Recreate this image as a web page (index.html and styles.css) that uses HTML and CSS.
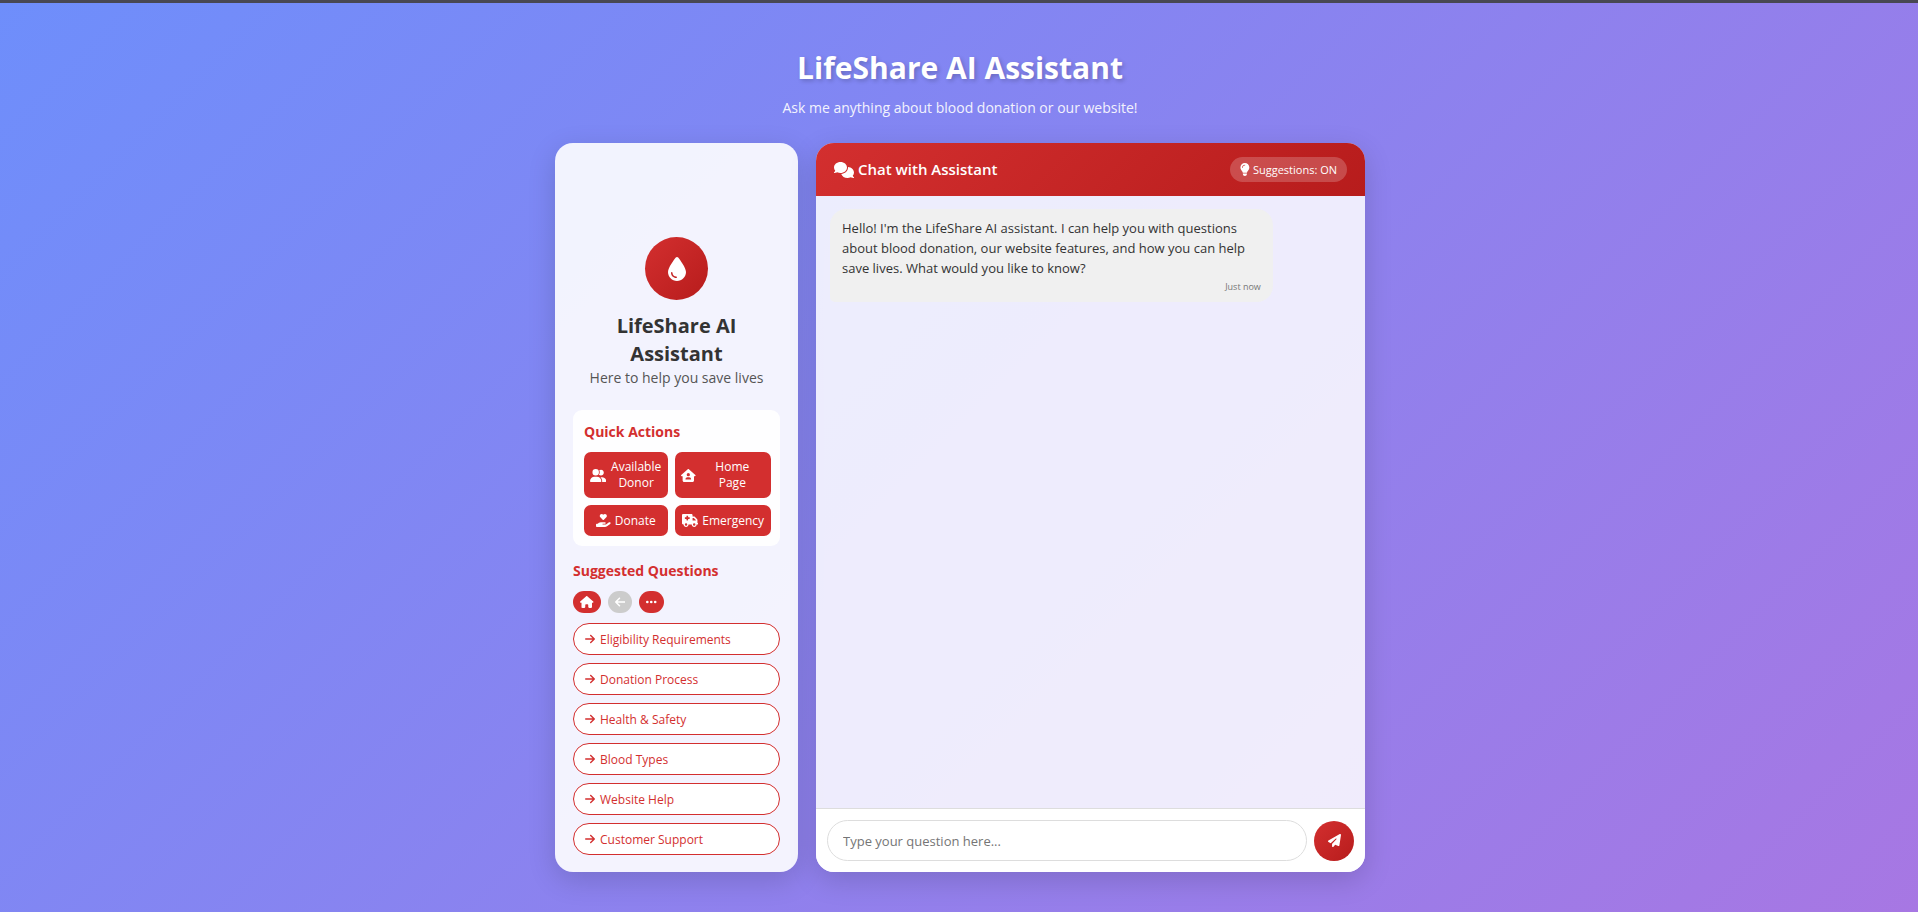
FILE: index.html
```html
<!DOCTYPE html>
<html lang="en">
<head>
<meta charset="utf-8">
<meta name="viewport" content="width=device-width, initial-scale=1">
<title>LifeShare AI Assistant</title>
<link rel="stylesheet" href="styles.css">
</head>
<body>
<svg class="sprite" aria-hidden="true">
  <symbol id="arrow-right" viewBox="0 0 448 512"><path d="M438.6 278.6c12.5-12.5 12.5-32.8 0-45.3l-160-160c-12.5-12.5-32.8-12.5-45.3 0s-12.5 32.8 0 45.3L338.8 224 32 224c-17.7 0-32 14.3-32 32s14.3 32 32 32l306.7 0L233.4 393.4c-12.5 12.5-12.5 32.8 0 45.3s32.8 12.5 45.3 0l160-160z"/></symbol>
</svg>
<div class="page">
  <header class="hero">
    <h1 class="hero-title">LifeShare AI Assistant</h1>
    <p class="hero-text">Ask me anything about blood donation or our website!</p>
  </header>
  <main class="layout">
    <aside class="sidebar">
      <div class="profile">
        <div class="avatar"><svg class="icon" viewBox="0 0 384 512"><path d="M192 512C86 512 0 426 0 320C0 228.8 130.2 57.7 166.6 11.7C172.6 4.2 181.5 0 191.1 0h1.8c9.6 0 18.5 4.2 24.5 11.7C253.8 57.7 384 228.8 384 320c0 106-86 192-192 192zM96 336c0-8.8-7.2-16-16-16s-16 7.2-16 16c0 61.9 50.1 112 112 112c8.8 0 16-7.2 16-16s-7.2-16-16-16c-44.2 0-80-35.8-80-80z"/></svg></div>
        <h2 class="profile-name">LifeShare AI Assistant</h2>
        <p class="profile-text">Here to help you save lives</p>
      </div>
      <section class="quick">
        <h3 class="section-title">Quick Actions</h3>
        <div class="quick-grid">
          <button class="quick-button" type="button"><svg class="icon" viewBox="0 0 640 512"><path d="M96 128a128 128 0 1 1 256 0A128 128 0 1 1 96 128zM0 482.3C0 383.8 79.8 304 178.3 304h91.4C368.2 304 448 383.8 448 482.3c0 16.4-13.3 29.7-29.7 29.7H29.7C13.3 512 0 498.7 0 482.3zM609.3 512H471.4c5.4-9.4 8.6-20.3 8.6-32v-8c0-60.7-27.1-115.2-69.8-151.8c2.4-.1 4.7-.2 7.1-.2h61.4C567.8 320 640 392.2 640 481.3c0 17-13.8 30.7-30.7 30.7zM432 256c-31 0-59-12.6-79.3-32.9C372.4 196.5 384 163.6 384 128c0-26.8-6.6-52.1-18.3-74.3C384.3 40.1 407.2 32 432 32c61.9 0 112 50.1 112 112s-50.1 112-112 112z"/></svg><span class="quick-label">Available Donor</span></button>
          <button class="quick-button quick-button-wide" type="button"><svg class="icon" viewBox="0 0 576 512"><path d="M575.8 255.5c0 18-15 32.1-32 32.1h-32l.7 160.2c.2 35.5-28.5 64.3-64 64.3H128.1c-35.3 0-64-28.7-64-64V287.6H32c-18 0-32-14-32-32.1c0-9 3-17 10-24L266.4 8c7-7 15-8 22-8s15 2 21 7L564.8 231.5c8 7 12 15 11 24zM352 224a64 64 0 1 0 -128 0 64 64 0 1 0 128 0zm-96 96c-44.2 0-80 35.8-80 80c0 8.8 7.2 16 16 16H384c8.8 0 16-7.2 16-16c0-44.2-35.8-80-80-80H256z"/></svg><span class="quick-label">Home<br>Page</span></button>
          <button class="quick-button" type="button"><svg class="icon" viewBox="0 0 576 512"><path d="M148 76.6C148 34.3 182.3 0 224.6 0c20.3 0 39.8 8.1 54.1 22.4l9.3 9.3 9.3-9.3C311.6 8.1 331.1 0 351.4 0C393.7 0 428 34.3 428 76.6c0 20.3-8.1 39.8-22.4 54.1L302.1 234.1c-7.8 7.8-20.5 7.8-28.3 0L170.4 130.7C156.1 116.4 148 96.9 148 76.6zM568.2 336.3c13.1 17.8 9.3 42.8-8.5 55.9L433.1 485.5c-23.4 17.2-51.6 26.5-80.7 26.5H32c-17.7 0-32-14.3-32-32V416c0-17.7 14.3-32 32-32H68.8l44.9-36c22.7-18.2 50.9-28 80-28H352c17.7 0 32 14.3 32 32s-14.3 32-32 32H272c-8.8 0-16 7.2-16 16s7.2 16 16 16H392.6l119.7-88.2c17.8-13.1 42.8-9.3 55.9 8.5z"/></svg><span>Donate</span></button>
          <button class="quick-button" type="button"><svg class="icon" viewBox="0 0 640 512"><path d="M0 48C0 21.5 21.5 0 48 0H368c26.5 0 48 21.5 48 48V96h50.7c17 0 33.3 6.7 45.3 18.7L589.3 192c12 12 18.7 28.3 18.7 45.3V352c17.7 0 32 14.3 32 32s-14.3 32-32 32H576c0 53-43 96-96 96s-96-43-96-96H256c0 53-43 96-96 96s-96-43-96-96H48c-26.5 0-48-21.5-48-48V48zM416 256H544V237.3L466.7 160H416v96zM160 464a48 48 0 1 0 0-96 48 48 0 1 0 0 96zm368-48a48 48 0 1 0 -96 0 48 48 0 1 0 96 0zM176 80v48l-48 0c-8.8 0-16 7.2-16 16v32c0 8.8 7.2 16 16 16h48v48c0 8.8 7.2 16 16 16h32c8.8 0 16-7.2 16-16V192h48c8.8 0 16-7.2 16-16V144c0-8.8-7.2-16-16-16H240V80c0-8.8-7.2-16-16-16H192c-8.8 0-16 7.2-16 16z"/></svg><span>Emergency</span></button>
        </div>
      </section>
      <section class="suggested">
        <h3 class="section-title">Suggested Questions</h3>
        <div class="pager">
          <button class="pager-button" type="button" aria-label="Home"><svg class="icon" viewBox="0 0 576 512"><path d="M575.8 255.5c0 18-15 32.1-32 32.1h-32l.7 160.2c0 2.7-.2 5.4-.5 8.1V472c0 22.1-17.9 40-40 40H392c-22.1 0-40-17.9-40-40V384c0-17.7-14.3-32-32-32H256c-17.7 0-32 14.3-32 32v88c0 22.1-17.9 40-40 40H104c-22.1 0-40-17.9-40-40V287.6H32c-18 0-32-14-32-32.1c0-9 3-17 10-24L266.4 8c7-7 15-8 22-8s15 2 21 7L564.8 231.5c8 7 12 15 11 24z"/></svg></button>
          <button class="pager-button" type="button" aria-label="Back" disabled><svg class="icon" viewBox="0 0 448 512"><path d="M9.4 233.4c-12.5 12.5-12.5 32.8 0 45.3l160 160c12.5 12.5 32.8 12.5 45.3 0s12.5-32.8 0-45.3L109.2 288 416 288c17.7 0 32-14.3 32-32s-14.3-32-32-32l-306.7 0L214.6 118.6c12.5-12.5 12.5-32.8 0-45.3s-32.8-12.5-45.3 0l-160 160z"/></svg></button>
          <button class="pager-button" type="button" aria-label="More"><svg class="icon" viewBox="0 0 448 512"><circle cx="56" cy="256" r="56"/><circle cx="224" cy="256" r="56"/><circle cx="392" cy="256" r="56"/></svg></button>
        </div>
        <div class="questions">
          <button class="question" type="button"><svg class="icon"><use href="#arrow-right"/></svg>Eligibility Requirements</button>
          <button class="question" type="button"><svg class="icon"><use href="#arrow-right"/></svg>Donation Process</button>
          <button class="question" type="button"><svg class="icon"><use href="#arrow-right"/></svg>Health &amp; Safety</button>
          <button class="question" type="button"><svg class="icon"><use href="#arrow-right"/></svg>Blood Types</button>
          <button class="question" type="button"><svg class="icon"><use href="#arrow-right"/></svg>Website Help</button>
          <button class="question" type="button"><svg class="icon"><use href="#arrow-right"/></svg>Customer Support</button>
        </div>
      </section>
    </aside>
    <section class="chat">
      <div class="chat-header">
        <h2 class="chat-title"><svg class="icon" viewBox="0 0 640 512"><path d="M208 352c114.9 0 208-78.8 208-176S322.9 0 208 0S0 78.8 0 176c0 38.6 14.7 74.3 39.6 103.4c-3.5 9.4-8.7 17.7-14.2 24.7c-4.8 6.2-9.7 11-13.3 14.3c-1.8 1.6-3.3 2.9-4.3 3.7c-.5 .4-.9 .7-1.1 .8l-.2 .2C1 327.2-1.4 334.4 .8 340.9S9.1 352 16 352c21.8 0 43.8-5.6 62.1-12.5c9.2-3.5 17.8-7.4 25.2-11.4C134.1 343.3 169.8 352 208 352zM448 176c0 112.3-99.1 196.9-216.5 207C255.8 457.4 336.4 512 432 512c38.2 0 73.9-8.7 104.7-23.9c7.5 4 16 7.9 25.2 11.4c18.3 6.9 40.3 12.5 62.1 12.5c6.9 0 13.1-4.5 15.2-11.1c2.1-6.6-.2-13.8-5.8-17.9l-.2-.2c-.2-.2-.6-.4-1.1-.8c-1-.8-2.5-2-4.3-3.7c-3.6-3.3-8.5-8.1-13.3-14.3c-5.5-7-10.7-15.4-14.2-24.7c24.9-29 39.6-64.7 39.6-103.4c0-92.8-84.9-168.9-192.6-175.5c.4 5.1 .6 10.3 .6 15.5z"/></svg>Chat with Assistant</h2>
        <button class="toggle" type="button"><svg class="icon" viewBox="0 0 384 512"><path d="M272 384c9.6-31.9 29.5-59.1 49.2-86.2c5.2-7.1 10.4-14.2 15.4-21.4c19.8-28.5 31.4-63 31.4-100.3C368 78.8 289.2 0 192 0S16 78.8 16 176c0 37.3 11.6 71.9 31.4 100.3c5 7.2 10.2 14.3 15.4 21.4c19.8 27.1 39.7 54.4 49.2 86.2H272zM192 512c44.2 0 80-35.8 80-80V416H112v16c0 44.2 35.8 80 80 80zM112 176c0 8.8-7.2 16-16 16s-16-7.2-16-16c0-61.9 50.1-112 112-112c8.8 0 16 7.2 16 16s-7.2 16-16 16c-44.2 0-80 35.8-80 80z"/></svg>Suggestions: ON</button>
      </div>
      <div class="messages">
        <article class="message">
          <p class="message-text">Hello! I'm the LifeShare AI assistant. I can help you with questions about blood donation, our website features, and how you can help save lives. What would you like to know?</p>
          <time class="message-time">Just now</time>
        </article>
      </div>
      <form class="composer">
        <input class="composer-input" type="text" placeholder="Type your question here..." aria-label="Your question">
        <button class="send" type="button" aria-label="Send"><svg class="icon" viewBox="0 0 512 512"><path d="M498.1 5.6c10.1 7 15.4 19.1 13.5 31.2l-64 416c-1.5 9.7-7.4 18.2-16 23s-18.9 5.4-28 1.6L284 427.7l-68.5 74.1c-8.9 9.7-22.9 12.9-35.2 8.1S160 493.2 160 480V396.4c0-4 1.5-7.8 4.2-10.7L331.8 202.8c5.8-6.3 5.6-16-.4-22s-15.7-6.4-22-.7L106 360.8 17.7 316.6C7.1 311.3 .3 300.7 0 288.9s5.9-22.8 16.1-28.7l448-256c10.7-6.1 23.9-5.5 34 1.4z"/></svg></button>
      </form>
    </section>
  </main>
</div>
</body>
</html>
```
FILE: styles.css
```css
:root {
  --red: #d32f2f;
  --red-fade: linear-gradient(135deg, #d32f2f, #b71c1c);
}

* { box-sizing: border-box; margin: 0; padding: 0; }

body {
  font-family: "Open Sans", "Noto Sans", sans-serif;
  color: #333;
  background: linear-gradient(135deg, #6e8efb, #a777e3) fixed;
}

button, input { font: inherit; }
button { border: none; cursor: pointer; }

.sprite { display: none; }

.icon {
  flex: none;
  height: 1em;
  fill: currentColor;
}

.page {
  display: flex;
  flex-direction: column;
  min-height: 100vh;
  padding: 43px 20px 40px 22px;
  border-top: 3px solid #484853;
}

.hero {
  margin-bottom: 24px;
  text-align: center;
  color: #fff;
}

.hero-title {
  margin-bottom: 7px;
  font-size: 30px;
  line-height: 44px;
  text-shadow: 2px 2px 4px rgba(0, 0, 0, 0.2);
}

.hero-text {
  font-size: 14px;
  line-height: 22px;
  opacity: 0.9;
}

.layout {
  flex: 1;
  display: grid;
  grid-template-columns: minmax(0, 243fr) minmax(0, 549fr);
  gap: 18px;
  width: 100%;
  max-width: 810px;
  margin: 0 auto;
}

.sidebar, .chat {
  border-radius: 18px;
  box-shadow: 0 8px 28px rgba(0, 0, 0, 0.15);
}

.sidebar {
  display: flex;
  flex-direction: column;
  justify-content: flex-end;
  gap: 14px;
  padding: 18px 18px 17px;
  background: rgba(255, 255, 255, 0.9);
}

.profile {
  display: flex;
  flex-direction: column;
  align-items: center;
  margin-bottom: 8px;
  text-align: center;
}

.avatar {
  display: grid;
  place-items: center;
  width: 63px;
  height: 63px;
  margin-bottom: 12px;
  border-radius: 50%;
  background: var(--red-fade);
  color: #fff;
  font-size: 24px;
}

.profile-name {
  padding: 0 28px;
  font-size: 20px;
  line-height: 28px;
}

.profile-text {
  font-size: 14px;
  line-height: 20px;
  color: #555;
  white-space: nowrap;
}

.quick {
  padding: 11px 9px 10px 11px;
  border-radius: 9px;
  background: rgba(255, 255, 255, 0.9);
}

.section-title {
  font-size: 14px;
  line-height: 22px;
  color: var(--red);
}

.quick-grid {
  display: grid;
  grid-template-columns: minmax(0, 84fr) minmax(0, 96fr);
  gap: 7px;
  margin-top: 9px;
}

.quick-button {
  display: flex;
  align-items: center;
  justify-content: center;
  gap: 4px;
  min-height: 31px;
  padding: 7px 6px;
  border-radius: 7px;
  background: var(--red);
  color: #fff;
  font-size: 12px;
  line-height: 16px;
}

.quick-button .icon { height: 13px; }

.quick-button-wide .quick-label { flex: 1; }

.pager {
  display: flex;
  gap: 7px;
  margin: 9px 0 10px;
}

.pager-button {
  display: flex;
  align-items: center;
  height: 22px;
  padding: 0 7px;
  border-radius: 14px;
  background: var(--red);
  color: #fff;
  font-size: 12px;
}

.pager-button:disabled { background: #ccc; }

.questions {
  display: grid;
  gap: 8px;
}

.question {
  display: flex;
  align-items: center;
  gap: 5px;
  min-height: 32px;
  padding: 0 11px;
  border: 1px solid var(--red);
  border-radius: 18px;
  background: #fff;
  color: var(--red);
  font-size: 12px;
  text-align: left;
}

.question .icon { width: 10px; }

.chat {
  display: flex;
  flex-direction: column;
  overflow: hidden;
  background: rgba(255, 255, 255, 0.85);
}

.chat-header {
  display: flex;
  align-items: center;
  justify-content: space-between;
  padding: 14px 18px;
  background: var(--red-fade);
  color: #fff;
}

.chat-title {
  display: flex;
  align-items: center;
  gap: 4px;
  font-size: 15px;
  line-height: 25px;
  font-weight: 600;
}

.chat-title .icon { height: 16px; }

.toggle {
  display: flex;
  align-items: center;
  gap: 3px;
  padding: 4px 10px;
  border-radius: 14px;
  background: rgba(255, 255, 255, 0.2);
  color: #fff;
  font-size: 11px;
  line-height: 17px;
}

.toggle .icon { height: 13px; }

.messages {
  flex: 1;
  padding: 13px 14px;
}

.message {
  width: fit-content;
  max-width: 85%;
  padding: 9px 12px;
  border-radius: 16px 16px 16px 5px;
  background: #f0f0f0;
}

.message-text {
  font-size: 13px;
  line-height: 20px;
}

.message-time {
  display: block;
  margin-top: 2px;
  font-size: 9px;
  line-height: 13px;
  text-align: right;
  color: #777;
}

.composer {
  display: flex;
  align-items: center;
  gap: 7px;
  padding: 11px;
  border-top: 1px solid #ddd;
  background: #fff;
}

.composer-input {
  flex: 1;
  min-width: 0;
  height: 41px;
  padding: 0 15px;
  border: 1px solid #ddd;
  border-radius: 22px;
  background: #fff;
  font-size: 13px;
}

.send {
  display: grid;
  place-items: center;
  width: 40px;
  height: 40px;
  border-radius: 50%;
  background: var(--red-fade);
  color: #fff;
  font-size: 13px;
}
```
